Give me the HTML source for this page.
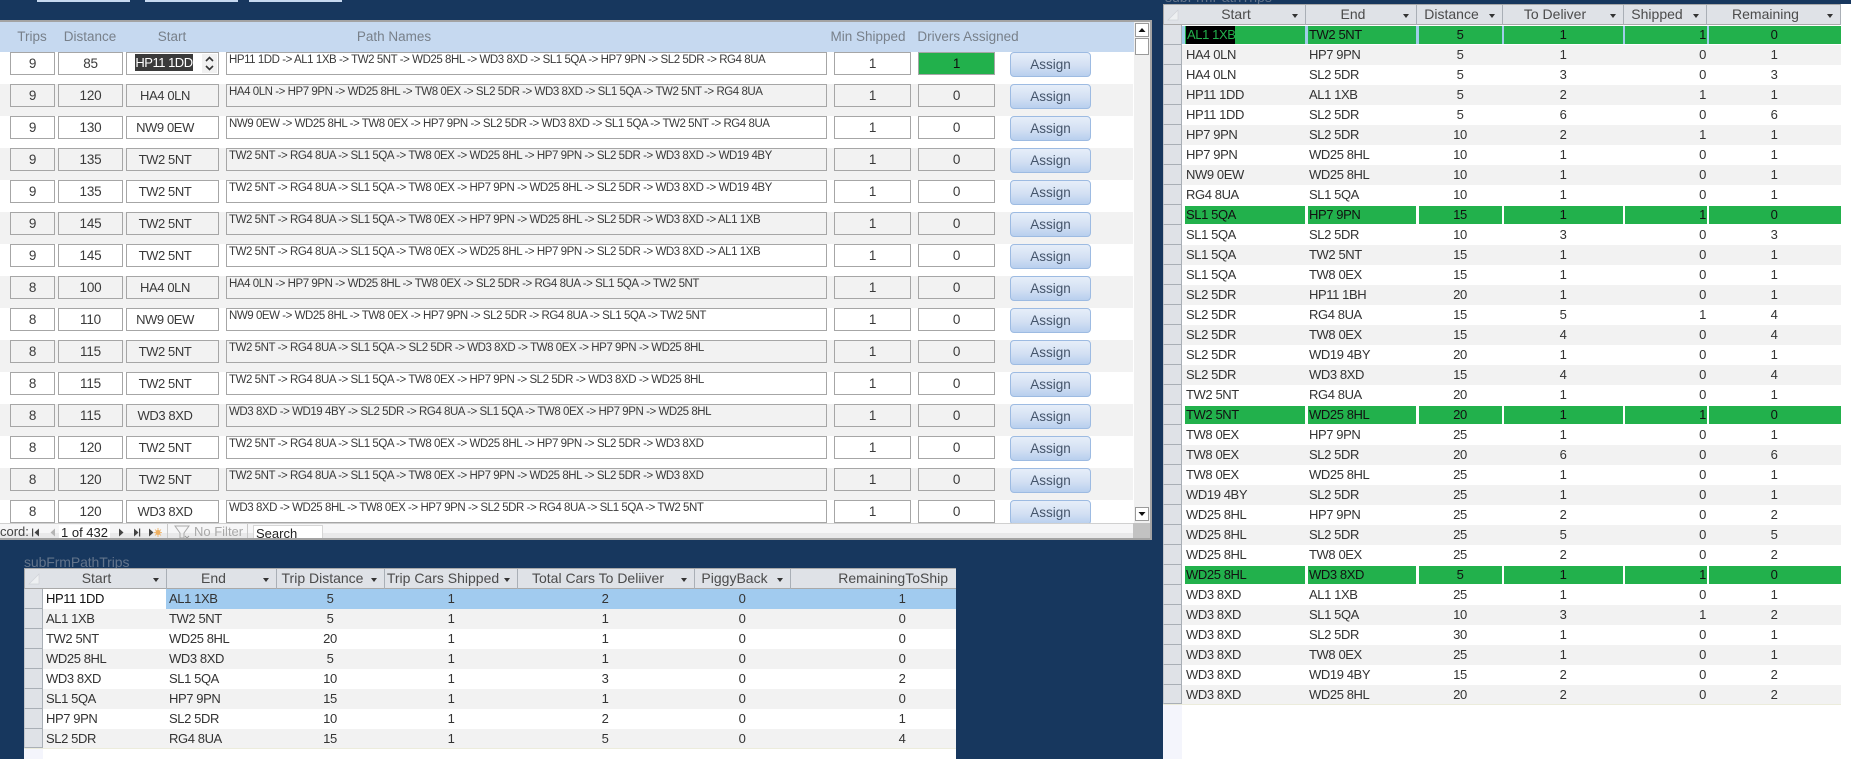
<!DOCTYPE html>
<html><head><meta charset="utf-8"><style>
*{box-sizing:border-box}
html,body{margin:0;padding:0;width:1851px;height:759px;overflow:hidden;background:#17375e;font-family:"Liberation Sans",sans-serif;color:#3c3c3c}
i{font-style:normal;position:absolute;white-space:nowrap}
.tab{position:absolute;top:0;height:2px;background:#c6d9f0}
#form{position:absolute;left:0;top:20px;width:1152px;height:520px;background:#fff;border:1px solid #a3a3a3;border-left:0;border-width:2px 2px 2px 0;overflow:hidden}
#hd{position:absolute;left:0;top:0;width:1150px;height:30px;background:#c6d9f0}
#hd i{top:0;line-height:30px;font-size:13.5px;color:#78808a;transform:translateX(-50%)}
.fr{position:absolute;left:0;width:1133px;height:32px;background:#fff}
.fr.g{background:#f2f2f2}
.fr b{font-weight:400;position:absolute;top:0;height:23px;border:1px solid #a6a6a6;text-align:center;line-height:21px;font-size:13.5px;letter-spacing:-.2px;background:inherit;color:#3a3a3a}
.a{left:10px;width:45px}.d{left:58px;width:65px}.fr b.s{left:126px;width:93px;padding-right:15px;font-size:13px;letter-spacing:-.4px}.m{left:834px;width:77px}.v{left:918px;width:77px}
.fr b.p{left:226px;width:601px;text-align:left;font-size:11.5px;line-height:15px;padding-left:2px;letter-spacing:-.45px;color:#3a3a3a}
.btn{position:absolute;left:1010px;top:0;width:81px;height:25px;border:1px solid #9dbbe2;border-radius:4px;background:linear-gradient(#e6eef9,#d3e0f3 55%,#b8cfee);text-align:center;line-height:24px;font-size:13.5px;color:#44546a}
#sb{position:absolute;left:1134px;top:0;width:16px;height:503px;background:#f0f0f0}
.sbb{position:absolute;left:1px;width:14px;height:14px;background:#fff;border:1px solid #9a9a9a}
#nav{position:absolute;left:0;top:501px;width:1150px;height:17px;background:linear-gradient(#f6f6f7 55%,#e9e9ea 55%);font-size:13px;line-height:17px;color:#444;border-top:1px solid #d0d0d0}
#nav i{top:-1px}
#corner{position:absolute;left:1133px;top:501px;width:17px;height:17px;background:#c2c2c2}
.t{position:absolute;background:#fff;overflow:hidden}
.th{position:absolute;left:0;top:0;height:21px;width:100%;background:#dfe2e7;border:1px solid #a9a9a9;border-width:1px 0 1px 1px}
.th u{text-decoration:none;position:absolute;top:0;height:20px;line-height:19px;font-size:14px;text-align:center;padding-right:16px;color:#4b4b4b;border-right:1px solid #a9afb6}
.th u:not(.n)::after{content:"";position:absolute;right:7px;top:9px;border:3.5px solid transparent;border-top:4px solid #333;border-bottom:0}
.th u.n{border-right:0}
.tr{position:absolute;height:20px;background:#fff;font-size:13px;line-height:20px;letter-spacing:-.4px;color:#333}
.tr.g{background:#f2f2f2}
.tr i{top:0}
.sel{position:absolute;width:19px;height:20px;background:#dfe2e7;border-bottom:1px solid #a9afb6;border-right:1px solid #a9afb6;border-left:1px solid #c4c7cc}
.c{transform:translateX(-50%)}
.grn{position:absolute;height:18px;top:1px;background:#22b14c}
</style></head><body>
<div class="tab" style="left:37px;width:93px"></div><div class="tab" style="left:145px;width:93px"></div><div class="tab" style="left:249px;width:93px"></div>

<div id="form">
<div id="hd"><i style="left:32px">Trips</i><i style="left:90px">Distance</i><i style="left:172px">Start</i><i style="left:394px">Path Names</i><i style="left:868px">Min Shipped</i><i style="left:968px">Drivers Assigned</i></div>

<div class="fr" style="top:30px"><b class="a">9</b><b class="d">85</b><b class="s"></b><b class="p">HP11 1DD -&gt; AL1 1XB -&gt; TW2 5NT -&gt; WD25 8HL -&gt; WD3 8XD -&gt; SL1 5QA -&gt; HP7 9PN -&gt; SL2 5DR -&gt; RG4 8UA</b><b class="m">1</b><b class="v" style="background:#22b14c;color:#111">1</b><span class="btn">Assign</span>
<i style="left:135px;top:2px;width:58px;height:17px;background:#3a3a3a;color:#fff;font-size:13px;line-height:17px;letter-spacing:-.5px;text-align:center">HP11 1DD</i>
<svg style="position:absolute;left:202px;top:2px" width="15" height="19"><rect width="15" height="19" fill="#f1f1f1"/><path d="M4 7l3.500-3.500L11 7M4 12l3.500 3.500L11 12" fill="none" stroke="#333" stroke-width="1.600"/></svg></div>
<div class="fr g" style="top:62px"><b class="a">9</b><b class="d">120</b><b class="s">HA4 0LN</b><b class="p">HA4 0LN -&gt; HP7 9PN -&gt; WD25 8HL -&gt; TW8 0EX -&gt; SL2 5DR -&gt; WD3 8XD -&gt; SL1 5QA -&gt; TW2 5NT -&gt; RG4 8UA</b><b class="m">1</b><b class="v">0</b><span class="btn">Assign</span></div>
<div class="fr" style="top:94px"><b class="a">9</b><b class="d">130</b><b class="s">NW9 0EW</b><b class="p">NW9 0EW -&gt; WD25 8HL -&gt; TW8 0EX -&gt; HP7 9PN -&gt; SL2 5DR -&gt; WD3 8XD -&gt; SL1 5QA -&gt; TW2 5NT -&gt; RG4 8UA</b><b class="m">1</b><b class="v">0</b><span class="btn">Assign</span></div>
<div class="fr g" style="top:126px"><b class="a">9</b><b class="d">135</b><b class="s">TW2 5NT</b><b class="p">TW2 5NT -&gt; RG4 8UA -&gt; SL1 5QA -&gt; TW8 0EX -&gt; WD25 8HL -&gt; HP7 9PN -&gt; SL2 5DR -&gt; WD3 8XD -&gt; WD19 4BY</b><b class="m">1</b><b class="v">0</b><span class="btn">Assign</span></div>
<div class="fr" style="top:158px"><b class="a">9</b><b class="d">135</b><b class="s">TW2 5NT</b><b class="p">TW2 5NT -&gt; RG4 8UA -&gt; SL1 5QA -&gt; TW8 0EX -&gt; HP7 9PN -&gt; WD25 8HL -&gt; SL2 5DR -&gt; WD3 8XD -&gt; WD19 4BY</b><b class="m">1</b><b class="v">0</b><span class="btn">Assign</span></div>
<div class="fr g" style="top:190px"><b class="a">9</b><b class="d">145</b><b class="s">TW2 5NT</b><b class="p">TW2 5NT -&gt; RG4 8UA -&gt; SL1 5QA -&gt; TW8 0EX -&gt; HP7 9PN -&gt; WD25 8HL -&gt; SL2 5DR -&gt; WD3 8XD -&gt; AL1 1XB</b><b class="m">1</b><b class="v">0</b><span class="btn">Assign</span></div>
<div class="fr" style="top:222px"><b class="a">9</b><b class="d">145</b><b class="s">TW2 5NT</b><b class="p">TW2 5NT -&gt; RG4 8UA -&gt; SL1 5QA -&gt; TW8 0EX -&gt; WD25 8HL -&gt; HP7 9PN -&gt; SL2 5DR -&gt; WD3 8XD -&gt; AL1 1XB</b><b class="m">1</b><b class="v">0</b><span class="btn">Assign</span></div>
<div class="fr g" style="top:254px"><b class="a">8</b><b class="d">100</b><b class="s">HA4 0LN</b><b class="p">HA4 0LN -&gt; HP7 9PN -&gt; WD25 8HL -&gt; TW8 0EX -&gt; SL2 5DR -&gt; RG4 8UA -&gt; SL1 5QA -&gt; TW2 5NT</b><b class="m">1</b><b class="v">0</b><span class="btn">Assign</span></div>
<div class="fr" style="top:286px"><b class="a">8</b><b class="d">110</b><b class="s">NW9 0EW</b><b class="p">NW9 0EW -&gt; WD25 8HL -&gt; TW8 0EX -&gt; HP7 9PN -&gt; SL2 5DR -&gt; RG4 8UA -&gt; SL1 5QA -&gt; TW2 5NT</b><b class="m">1</b><b class="v">0</b><span class="btn">Assign</span></div>
<div class="fr g" style="top:318px"><b class="a">8</b><b class="d">115</b><b class="s">TW2 5NT</b><b class="p">TW2 5NT -&gt; RG4 8UA -&gt; SL1 5QA -&gt; SL2 5DR -&gt; WD3 8XD -&gt; TW8 0EX -&gt; HP7 9PN -&gt; WD25 8HL</b><b class="m">1</b><b class="v">0</b><span class="btn">Assign</span></div>
<div class="fr" style="top:350px"><b class="a">8</b><b class="d">115</b><b class="s">TW2 5NT</b><b class="p">TW2 5NT -&gt; RG4 8UA -&gt; SL1 5QA -&gt; TW8 0EX -&gt; HP7 9PN -&gt; SL2 5DR -&gt; WD3 8XD -&gt; WD25 8HL</b><b class="m">1</b><b class="v">0</b><span class="btn">Assign</span></div>
<div class="fr g" style="top:382px"><b class="a">8</b><b class="d">115</b><b class="s">WD3 8XD</b><b class="p">WD3 8XD -&gt; WD19 4BY -&gt; SL2 5DR -&gt; RG4 8UA -&gt; SL1 5QA -&gt; TW8 0EX -&gt; HP7 9PN -&gt; WD25 8HL</b><b class="m">1</b><b class="v">0</b><span class="btn">Assign</span></div>
<div class="fr" style="top:414px"><b class="a">8</b><b class="d">120</b><b class="s">TW2 5NT</b><b class="p">TW2 5NT -&gt; RG4 8UA -&gt; SL1 5QA -&gt; TW8 0EX -&gt; WD25 8HL -&gt; HP7 9PN -&gt; SL2 5DR -&gt; WD3 8XD</b><b class="m">1</b><b class="v">0</b><span class="btn">Assign</span></div>
<div class="fr g" style="top:446px"><b class="a">8</b><b class="d">120</b><b class="s">TW2 5NT</b><b class="p">TW2 5NT -&gt; RG4 8UA -&gt; SL1 5QA -&gt; TW8 0EX -&gt; HP7 9PN -&gt; WD25 8HL -&gt; SL2 5DR -&gt; WD3 8XD</b><b class="m">1</b><b class="v">0</b><span class="btn">Assign</span></div>
<div class="fr" style="top:478px;height:23px;overflow:hidden"><b class="a">8</b><b class="d">120</b><b class="s">WD3 8XD</b><b class="p">WD3 8XD -&gt; WD25 8HL -&gt; TW8 0EX -&gt; HP7 9PN -&gt; SL2 5DR -&gt; RG4 8UA -&gt; SL1 5QA -&gt; TW2 5NT</b><b class="m">1</b><b class="v">0</b><span class="btn">Assign</span></div>

<div id="sb">
<div class="sbb" style="top:1px"><svg width="12" height="12" style="display:block"><path d="M2.500 8h7L6 4z" fill="#111"/></svg></div>
<div class="sbb" style="top:16px;height:17px"></div>
<div class="sbb" style="top:485px"><svg width="12" height="12" style="display:block"><path d="M2.500 4h7L6 8z" fill="#111"/></svg></div>
</div>

<div id="nav">
<i style="left:0">cord:</i>
<svg style="position:absolute;left:30px;top:2px" width="140" height="13"><path d="M2 2.500v8h1.200v-8zM9 2.500v8L4.500 6.500z" fill="#444"/><path d="M25 2.500v8L20.500 6.500z" fill="#b5b5b5"/></svg>
<i style="left:59px;top:1px;width:51px;height:16px;background:#fff;line-height:15px;padding-left:2px;color:#222;font-size:13px">1 of 432</i>
<svg style="position:absolute;left:115px;top:2px" width="52" height="13"><path d="M4 2.500v8L8.500 6.500zM19 2.500v8L23.500 6.500zM24 2.500v8h1.200v-8zM34 2.500v8L38.500 6.500z" fill="#444"/><circle cx="43" cy="6.500" r="2.500" fill="#f0b060"/><path d="M43 2v9M39 6.500h8M40 3.500l6 6M46 3.500l-6 6" stroke="#f0b060" stroke-width=".8"/></svg>
<div style="position:absolute;left:167px;top:0;width:1px;height:16px;background:#c8c8c8"></div>
<svg style="position:absolute;left:174px;top:1px" width="18" height="16"><path d="M1 1h14L10 8v5H6V8z" fill="none" stroke="#aaa"/><path d="M11 11l4 4M15 11l-4 4" stroke="#999"/></svg>
<i style="left:194px;color:#a8a8a8">No Filter</i>
<div style="position:absolute;left:247px;top:0;width:1px;height:16px;background:#c8c8c8"></div>
<i style="left:253px;top:1px;width:70px;height:16px;background:#fff;line-height:15px;padding-left:2px;color:#222;font-size:13px;border:1px solid #d6d6d6;border-bottom:0">Search</i>
</div>
<div id="corner"></div>
</div>

<i style="left:24px;top:554px;font-size:14px;line-height:16px;color:#63748b;letter-spacing:-.1px">subFrmPathTrips</i>

<div class="t" style="left:24px;top:568px;width:932px;height:191px">
<div class="th"><u class="" style="left:18px;width:124px">Start</u><u style="left:142px;width:110px">End</u><u style="left:252px;width:108px">Trip Distance</u><u style="left:360px;width:133px">Trip Cars Shipped</u><u style="left:493px;width:177px">Total Cars To Deliiver</u><u style="left:670px;width:96px">PiggyBack</u><u class="n" style="left:766px;width:165px;text-align:right;padding:0 8px 0 0">RemainingToShip</u><svg style="position:absolute;left:3px;top:4px" width="12" height="12"><path d="M11 1v10H1z" fill="#eef0f2" stroke="#d0d3d8" stroke-width=".7"/></svg></div>
<div style="position:absolute;left:0;top:181px;width:19px;height:10px;background:#f4f5fc"></div>
<div style="position:absolute;left:0;top:180px;width:932px;height:1px;background:#ececdc"></div>

<div class="sel" style="left:0;top:21px"></div><div class="tr" style="left:19px;top:21px;width:913px;background:#a1cbef"><div style="position:absolute;left:0;top:0;width:123px;height:20px;background:#fff"></div><i style="left:3px;color:#111">HP11 1DD</i><i style="left:126px">AL1 1XB</i><i class="c" style="left:287px">5</i><i class="c" style="left:408px">1</i><i class="c" style="left:562px">2</i><i class="c" style="left:699px">0</i><i class="c" style="left:859px">1</i></div>
<div class="sel" style="left:0;top:41px"></div><div class="tr g" style="left:19px;top:41px;width:913px"><i style="left:3px">AL1 1XB</i><i style="left:126px">TW2 5NT</i><i class="c" style="left:287px">5</i><i class="c" style="left:408px">1</i><i class="c" style="left:562px">1</i><i class="c" style="left:699px">0</i><i class="c" style="left:859px">0</i></div>
<div class="sel" style="left:0;top:61px"></div><div class="tr" style="left:19px;top:61px;width:913px"><i style="left:3px">TW2 5NT</i><i style="left:126px">WD25 8HL</i><i class="c" style="left:287px">20</i><i class="c" style="left:408px">1</i><i class="c" style="left:562px">1</i><i class="c" style="left:699px">0</i><i class="c" style="left:859px">0</i></div>
<div class="sel" style="left:0;top:81px"></div><div class="tr g" style="left:19px;top:81px;width:913px"><i style="left:3px">WD25 8HL</i><i style="left:126px">WD3 8XD</i><i class="c" style="left:287px">5</i><i class="c" style="left:408px">1</i><i class="c" style="left:562px">1</i><i class="c" style="left:699px">0</i><i class="c" style="left:859px">0</i></div>
<div class="sel" style="left:0;top:101px"></div><div class="tr" style="left:19px;top:101px;width:913px"><i style="left:3px">WD3 8XD</i><i style="left:126px">SL1 5QA</i><i class="c" style="left:287px">10</i><i class="c" style="left:408px">1</i><i class="c" style="left:562px">3</i><i class="c" style="left:699px">0</i><i class="c" style="left:859px">2</i></div>
<div class="sel" style="left:0;top:121px"></div><div class="tr g" style="left:19px;top:121px;width:913px"><i style="left:3px">SL1 5QA</i><i style="left:126px">HP7 9PN</i><i class="c" style="left:287px">15</i><i class="c" style="left:408px">1</i><i class="c" style="left:562px">1</i><i class="c" style="left:699px">0</i><i class="c" style="left:859px">0</i></div>
<div class="sel" style="left:0;top:141px"></div><div class="tr" style="left:19px;top:141px;width:913px"><i style="left:3px">HP7 9PN</i><i style="left:126px">SL2 5DR</i><i class="c" style="left:287px">10</i><i class="c" style="left:408px">1</i><i class="c" style="left:562px">2</i><i class="c" style="left:699px">0</i><i class="c" style="left:859px">1</i></div>
<div class="sel" style="left:0;top:161px;height:19px"></div><div class="tr g" style="left:19px;top:161px;width:913px;height:19px"><i style="left:3px">SL2 5DR</i><i style="left:126px">RG4 8UA</i><i class="c" style="left:287px">15</i><i class="c" style="left:408px">1</i><i class="c" style="left:562px">5</i><i class="c" style="left:699px">0</i><i class="c" style="left:859px">4</i></div>
</div>

<i style="left:1165px;top:-11px;font-size:14px;line-height:16px;color:#63748b">subFrmPathTrips</i>

<div class="t" style="left:1163px;top:4px;width:688px;height:755px">
<div class="th" style="width:678px"><u style="left:19px;width:123px">Start</u><u style="left:142px;width:111px">End</u><u style="left:253px;width:86px">Distance</u><u style="left:339px;width:121px">To Deliver</u><u style="left:460px;width:83px">Shipped</u><u style="left:543px;width:134px">Remaining</u><svg style="position:absolute;left:3px;top:4px" width="12" height="12"><path d="M11 1v10H1z" fill="#eef0f2" stroke="#d0d3d8" stroke-width=".7"/></svg></div>
<div style="position:absolute;left:0;top:701px;width:19px;height:54px;background:#f4f5fc"></div>
<div style="position:absolute;left:0;top:700px;width:678px;height:1px;background:#ececdc"></div>

<div class="sel" style="left:0;top:21px"></div><div class="tr" style="left:19px;top:21px;width:659px"><div style="position:absolute;left:0;top:1px;width:659px;height:18px;background:#a0cde9"></div><div class="grn" style="left:3px;width:120px"></div><div class="grn" style="left:126px;width:108px"></div><div class="grn" style="left:237px;width:83px"></div><div class="grn" style="left:322px;width:119px"></div><div class="grn" style="left:443px;width:82px"></div><div class="grn" style="left:527px;width:132px"></div><i style="left:4px;top:1px;height:18px;line-height:18px;padding:0 1px;width:49px;background:#000;color:#22b14c">AL1 1XB</i><i style="left:127px;color:#111">TW2 5NT</i><i class="c" style="left:278px;color:#111">5</i><i class="c" style="left:381px;color:#111">1</i><i style="right:135px;color:#111">1</i><i class="c" style="left:592px;color:#111">0</i></div>
<div class="sel" style="left:0;top:41px"></div><div class="tr g" style="left:19px;top:41px;width:659px"><i style="left:4px">HA4 0LN</i><i style="left:127px">HP7 9PN</i><i class="c" style="left:278px">5</i><i class="c" style="left:381px">1</i><i style="right:135px">0</i><i class="c" style="left:592px">1</i></div>
<div class="sel" style="left:0;top:61px"></div><div class="tr" style="left:19px;top:61px;width:659px"><i style="left:4px">HA4 0LN</i><i style="left:127px">SL2 5DR</i><i class="c" style="left:278px">5</i><i class="c" style="left:381px">3</i><i style="right:135px">0</i><i class="c" style="left:592px">3</i></div>
<div class="sel" style="left:0;top:81px"></div><div class="tr g" style="left:19px;top:81px;width:659px"><i style="left:4px">HP11 1DD</i><i style="left:127px">AL1 1XB</i><i class="c" style="left:278px">5</i><i class="c" style="left:381px">2</i><i style="right:135px">1</i><i class="c" style="left:592px">1</i></div>
<div class="sel" style="left:0;top:101px"></div><div class="tr" style="left:19px;top:101px;width:659px"><i style="left:4px">HP11 1DD</i><i style="left:127px">SL2 5DR</i><i class="c" style="left:278px">5</i><i class="c" style="left:381px">6</i><i style="right:135px">0</i><i class="c" style="left:592px">6</i></div>
<div class="sel" style="left:0;top:121px"></div><div class="tr g" style="left:19px;top:121px;width:659px"><i style="left:4px">HP7 9PN</i><i style="left:127px">SL2 5DR</i><i class="c" style="left:278px">10</i><i class="c" style="left:381px">2</i><i style="right:135px">1</i><i class="c" style="left:592px">1</i></div>
<div class="sel" style="left:0;top:141px"></div><div class="tr" style="left:19px;top:141px;width:659px"><i style="left:4px">HP7 9PN</i><i style="left:127px">WD25 8HL</i><i class="c" style="left:278px">10</i><i class="c" style="left:381px">1</i><i style="right:135px">0</i><i class="c" style="left:592px">1</i></div>
<div class="sel" style="left:0;top:161px"></div><div class="tr g" style="left:19px;top:161px;width:659px"><i style="left:4px">NW9 0EW</i><i style="left:127px">WD25 8HL</i><i class="c" style="left:278px">10</i><i class="c" style="left:381px">1</i><i style="right:135px">0</i><i class="c" style="left:592px">1</i></div>
<div class="sel" style="left:0;top:181px"></div><div class="tr" style="left:19px;top:181px;width:659px"><i style="left:4px">RG4 8UA</i><i style="left:127px">SL1 5QA</i><i class="c" style="left:278px">10</i><i class="c" style="left:381px">1</i><i style="right:135px">0</i><i class="c" style="left:592px">1</i></div>
<div class="sel" style="left:0;top:201px"></div><div class="tr" style="left:19px;top:201px;width:659px"><div class="grn" style="left:3px;width:120px"></div><div class="grn" style="left:126px;width:108px"></div><div class="grn" style="left:237px;width:83px"></div><div class="grn" style="left:322px;width:119px"></div><div class="grn" style="left:443px;width:82px"></div><div class="grn" style="left:527px;width:132px"></div><i style="left:4px;color:#111">SL1 5QA</i><i style="left:127px;color:#111">HP7 9PN</i><i class="c" style="left:278px;color:#111">15</i><i class="c" style="left:381px;color:#111">1</i><i style="right:135px;color:#111">1</i><i class="c" style="left:592px;color:#111">0</i></div>
<div class="sel" style="left:0;top:221px"></div><div class="tr" style="left:19px;top:221px;width:659px"><i style="left:4px">SL1 5QA</i><i style="left:127px">SL2 5DR</i><i class="c" style="left:278px">10</i><i class="c" style="left:381px">3</i><i style="right:135px">0</i><i class="c" style="left:592px">3</i></div>
<div class="sel" style="left:0;top:241px"></div><div class="tr g" style="left:19px;top:241px;width:659px"><i style="left:4px">SL1 5QA</i><i style="left:127px">TW2 5NT</i><i class="c" style="left:278px">15</i><i class="c" style="left:381px">1</i><i style="right:135px">0</i><i class="c" style="left:592px">1</i></div>
<div class="sel" style="left:0;top:261px"></div><div class="tr" style="left:19px;top:261px;width:659px"><i style="left:4px">SL1 5QA</i><i style="left:127px">TW8 0EX</i><i class="c" style="left:278px">15</i><i class="c" style="left:381px">1</i><i style="right:135px">0</i><i class="c" style="left:592px">1</i></div>
<div class="sel" style="left:0;top:281px"></div><div class="tr g" style="left:19px;top:281px;width:659px"><i style="left:4px">SL2 5DR</i><i style="left:127px">HP11 1BH</i><i class="c" style="left:278px">20</i><i class="c" style="left:381px">1</i><i style="right:135px">0</i><i class="c" style="left:592px">1</i></div>
<div class="sel" style="left:0;top:301px"></div><div class="tr" style="left:19px;top:301px;width:659px"><i style="left:4px">SL2 5DR</i><i style="left:127px">RG4 8UA</i><i class="c" style="left:278px">15</i><i class="c" style="left:381px">5</i><i style="right:135px">1</i><i class="c" style="left:592px">4</i></div>
<div class="sel" style="left:0;top:321px"></div><div class="tr g" style="left:19px;top:321px;width:659px"><i style="left:4px">SL2 5DR</i><i style="left:127px">TW8 0EX</i><i class="c" style="left:278px">15</i><i class="c" style="left:381px">4</i><i style="right:135px">0</i><i class="c" style="left:592px">4</i></div>
<div class="sel" style="left:0;top:341px"></div><div class="tr" style="left:19px;top:341px;width:659px"><i style="left:4px">SL2 5DR</i><i style="left:127px">WD19 4BY</i><i class="c" style="left:278px">20</i><i class="c" style="left:381px">1</i><i style="right:135px">0</i><i class="c" style="left:592px">1</i></div>
<div class="sel" style="left:0;top:361px"></div><div class="tr g" style="left:19px;top:361px;width:659px"><i style="left:4px">SL2 5DR</i><i style="left:127px">WD3 8XD</i><i class="c" style="left:278px">15</i><i class="c" style="left:381px">4</i><i style="right:135px">0</i><i class="c" style="left:592px">4</i></div>
<div class="sel" style="left:0;top:381px"></div><div class="tr" style="left:19px;top:381px;width:659px"><i style="left:4px">TW2 5NT</i><i style="left:127px">RG4 8UA</i><i class="c" style="left:278px">20</i><i class="c" style="left:381px">1</i><i style="right:135px">0</i><i class="c" style="left:592px">1</i></div>
<div class="sel" style="left:0;top:401px"></div><div class="tr" style="left:19px;top:401px;width:659px"><div class="grn" style="left:3px;width:120px"></div><div class="grn" style="left:126px;width:108px"></div><div class="grn" style="left:237px;width:83px"></div><div class="grn" style="left:322px;width:119px"></div><div class="grn" style="left:443px;width:82px"></div><div class="grn" style="left:527px;width:132px"></div><i style="left:4px;color:#111">TW2 5NT</i><i style="left:127px;color:#111">WD25 8HL</i><i class="c" style="left:278px;color:#111">20</i><i class="c" style="left:381px;color:#111">1</i><i style="right:135px;color:#111">1</i><i class="c" style="left:592px;color:#111">0</i></div>
<div class="sel" style="left:0;top:421px"></div><div class="tr" style="left:19px;top:421px;width:659px"><i style="left:4px">TW8 0EX</i><i style="left:127px">HP7 9PN</i><i class="c" style="left:278px">25</i><i class="c" style="left:381px">1</i><i style="right:135px">0</i><i class="c" style="left:592px">1</i></div>
<div class="sel" style="left:0;top:441px"></div><div class="tr g" style="left:19px;top:441px;width:659px"><i style="left:4px">TW8 0EX</i><i style="left:127px">SL2 5DR</i><i class="c" style="left:278px">20</i><i class="c" style="left:381px">6</i><i style="right:135px">0</i><i class="c" style="left:592px">6</i></div>
<div class="sel" style="left:0;top:461px"></div><div class="tr" style="left:19px;top:461px;width:659px"><i style="left:4px">TW8 0EX</i><i style="left:127px">WD25 8HL</i><i class="c" style="left:278px">25</i><i class="c" style="left:381px">1</i><i style="right:135px">0</i><i class="c" style="left:592px">1</i></div>
<div class="sel" style="left:0;top:481px"></div><div class="tr g" style="left:19px;top:481px;width:659px"><i style="left:4px">WD19 4BY</i><i style="left:127px">SL2 5DR</i><i class="c" style="left:278px">25</i><i class="c" style="left:381px">1</i><i style="right:135px">0</i><i class="c" style="left:592px">1</i></div>
<div class="sel" style="left:0;top:501px"></div><div class="tr" style="left:19px;top:501px;width:659px"><i style="left:4px">WD25 8HL</i><i style="left:127px">HP7 9PN</i><i class="c" style="left:278px">25</i><i class="c" style="left:381px">2</i><i style="right:135px">0</i><i class="c" style="left:592px">2</i></div>
<div class="sel" style="left:0;top:521px"></div><div class="tr g" style="left:19px;top:521px;width:659px"><i style="left:4px">WD25 8HL</i><i style="left:127px">SL2 5DR</i><i class="c" style="left:278px">25</i><i class="c" style="left:381px">5</i><i style="right:135px">0</i><i class="c" style="left:592px">5</i></div>
<div class="sel" style="left:0;top:541px"></div><div class="tr" style="left:19px;top:541px;width:659px"><i style="left:4px">WD25 8HL</i><i style="left:127px">TW8 0EX</i><i class="c" style="left:278px">25</i><i class="c" style="left:381px">2</i><i style="right:135px">0</i><i class="c" style="left:592px">2</i></div>
<div class="sel" style="left:0;top:561px"></div><div class="tr" style="left:19px;top:561px;width:659px"><div class="grn" style="left:3px;width:120px"></div><div class="grn" style="left:126px;width:108px"></div><div class="grn" style="left:237px;width:83px"></div><div class="grn" style="left:322px;width:119px"></div><div class="grn" style="left:443px;width:82px"></div><div class="grn" style="left:527px;width:132px"></div><i style="left:4px;color:#111">WD25 8HL</i><i style="left:127px;color:#111">WD3 8XD</i><i class="c" style="left:278px;color:#111">5</i><i class="c" style="left:381px;color:#111">1</i><i style="right:135px;color:#111">1</i><i class="c" style="left:592px;color:#111">0</i></div>
<div class="sel" style="left:0;top:581px"></div><div class="tr" style="left:19px;top:581px;width:659px"><i style="left:4px">WD3 8XD</i><i style="left:127px">AL1 1XB</i><i class="c" style="left:278px">25</i><i class="c" style="left:381px">1</i><i style="right:135px">0</i><i class="c" style="left:592px">1</i></div>
<div class="sel" style="left:0;top:601px"></div><div class="tr g" style="left:19px;top:601px;width:659px"><i style="left:4px">WD3 8XD</i><i style="left:127px">SL1 5QA</i><i class="c" style="left:278px">10</i><i class="c" style="left:381px">3</i><i style="right:135px">1</i><i class="c" style="left:592px">2</i></div>
<div class="sel" style="left:0;top:621px"></div><div class="tr" style="left:19px;top:621px;width:659px"><i style="left:4px">WD3 8XD</i><i style="left:127px">SL2 5DR</i><i class="c" style="left:278px">30</i><i class="c" style="left:381px">1</i><i style="right:135px">0</i><i class="c" style="left:592px">1</i></div>
<div class="sel" style="left:0;top:641px"></div><div class="tr g" style="left:19px;top:641px;width:659px"><i style="left:4px">WD3 8XD</i><i style="left:127px">TW8 0EX</i><i class="c" style="left:278px">25</i><i class="c" style="left:381px">1</i><i style="right:135px">0</i><i class="c" style="left:592px">1</i></div>
<div class="sel" style="left:0;top:661px"></div><div class="tr" style="left:19px;top:661px;width:659px"><i style="left:4px">WD3 8XD</i><i style="left:127px">WD19 4BY</i><i class="c" style="left:278px">15</i><i class="c" style="left:381px">2</i><i style="right:135px">0</i><i class="c" style="left:592px">2</i></div>
<div class="sel" style="left:0;top:681px;height:19px"></div><div class="tr g" style="left:19px;top:681px;width:659px;height:19px"><i style="left:4px">WD3 8XD</i><i style="left:127px">WD25 8HL</i><i class="c" style="left:278px">20</i><i class="c" style="left:381px">2</i><i style="right:135px">0</i><i class="c" style="left:592px">2</i></div>
</div>
</body></html>
